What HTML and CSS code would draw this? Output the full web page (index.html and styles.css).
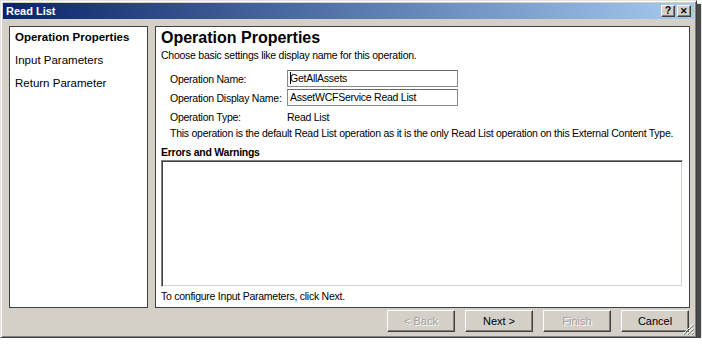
FILE: index.html
```
<!doctype html>
<html>
<head>
    <meta charset="utf-8">
    <title>Read List</title>
    <link rel="stylesheet" href="styles.css">
</head>
<body>
<div class="window">
	<div class="titlebar">
		<span class="title">Read List</span>
		<div class="caption-btns">
			<span class="cbtn">?</span>
			<span class="cbtn x">&#x2715;</span>
		</div>
	</div>
	<div class="content">
		<ul class="nav">
			<li class="active">Operation Properties</li>
			<li>Input Parameters</li>
			<li>Return Parameter</li>
		</ul>
		<div class="main">
			<h1>Operation Properties</h1>
			<p class="intro">Choose basic settings like display name for this operation.</p>
			<div class="form">
				<label>Operation Name:</label>
				<div class="field"><span class="caret"></span>GetAllAssets</div>
				<label>Operation Display Name:</label>
				<div class="field">AssetWCFService Read List</div>
				<label class="plain">Operation Type:</label>
				<span class="plain">Read List</span>
			</div>
			<p class="note">This operation is the default Read List operation as it is the only Read List operation on this External Content Type.</p>
			<h2>Errors and Warnings</h2>
			<div class="errors"></div>
			<p class="hint">To configure Input Parameters, click Next.</p>
		</div>
	</div>
	<div class="footer">
		<button class="btn" disabled>&lt; Back</button>
		<button class="btn">Next &gt;</button>
		<button class="btn" disabled>Finish</button>
		<button class="btn">Cancel</button>
	</div>
	<svg class="grip" width="12" height="12" viewBox="0 0 12 12">
		<path d="M11 1 L1 11 M11 5 L5 11 M11 9 L9 11" stroke="#fff" stroke-width="1"/>
		<path d="M12 2 L2 12 M12 6 L6 12 M12 10 L10 12" stroke="#808080" stroke-width="1"/>
	</svg>
</div>
</body>
</html>
```
FILE: styles.css
```
*{margin: 0;padding: 0;list-style: none;box-sizing: border-box;}
html,body{background: #fff;}
body{
	font-family: "Liberation Sans", Arial, sans-serif;
	font-size: 10.5px;color: #000;
	letter-spacing: -0.25px;
	white-space: nowrap;
}
.window{
	position: relative;
	width: 697px;height: 338px;
	background: #d4d0c8;
	border: 1px solid;
	border-color: #e6e3de #404040 #404040 #e6e3de;
	box-shadow: inset 1px 1px #fff, inset -1px -1px #808080, 4px 4px 1px #4a4a4a;
	padding: 2px 2px 0 2px;
	display: flex;flex-direction: column;
}
.titlebar{
	height: 16px;
	background: linear-gradient(to right, #0a246a, #a6caf0);
	display: flex;align-items: center;justify-content: space-between;
	padding: 0 3px 0 3px;
}
.title{
	color: #fff;font-weight: bold;font-size: 11px;letter-spacing: 0;
}
.caption-btns{display: flex;gap: 2px;}
.cbtn{
	width: 14px;height: 12px;
	background: #d4d0c8;
	border: 1px solid;
	border-color: #fff #404040 #404040 #fff;
	box-shadow: inset -1px -1px #808080;
	font-size: 10px;font-weight: bold;line-height: 10px;
	text-align: center;letter-spacing: 0;
}
.cbtn.x{font-size: 9px;}
.content{
	display: flex;gap: 7px;
	padding: 7px 4px 0 6px;
	height: 289px;
}
.nav{
	width: 139px;height: 282px;
	background: #fff;
	border: 1px solid #404040;
	padding: 0 0 0 5px;
}
.nav li{
	line-height: 21px;margin-bottom: 2px;
	font-size: 11.5px;letter-spacing: 0;
}
.nav li.active{font-weight: bold;}
.main{
	width: 535px;height: 282px;
	background: #fff;
	border: 1px solid #404040;
	padding: 1px 5px 0 5px;
}
h1{
	font-size: 16px;font-weight: bold;line-height: 20px;letter-spacing: 0;
}
.intro{line-height: 14px;}
.form{
	display: grid;
	grid-template-columns: 117px 171px;
	grid-auto-rows: 17px;
	row-gap: 2px;
	align-items: center;
	margin: 8px 0 0 9px;
}
.form .plain{line-height: 14px;}
.field{
	height: 17px;
	border: 1px solid #8a8a8a;
	border-top-color: #6a6a6a;
	padding-left: 2px;
	line-height: 15px;
	position: relative;
}
.caret{
	position: absolute;left: 2px;top: 1px;
	width: 1px;height: 12px;background: #000;
}
.note{
	line-height: 14px;margin: 1px 0 0 9px;
}
h2{
	font-size: 10.5px;font-weight: bold;line-height: 14px;
	margin-top: 5px;
}
.errors{
	width: 522px;height: 127px;
	margin-top: 1px;
	background: #fff;
	border: 1px solid;
	border-color: #808080 #fff #fff #808080;
	box-shadow: inset 1px 1px #404040, inset -1px -1px #d4d0c8;
}
.hint{line-height: 14px;margin-top: 2px;}
.footer{
	display: flex;justify-content: flex-end;gap: 10px;
	padding: 2px 5px 0 0;
}
.btn{
	width: 68px;height: 22px;
	background: #d4d0c8;
	font-family: "Liberation Sans", Arial, sans-serif;
	font-size: 11px;color: #000;
	border: 1px solid;
	border-color: #fff #404040 #404040 #fff;
	box-shadow: inset -1px -1px #808080;
}
.btn:disabled{
	color: #a0a0a0;
	text-shadow: 1px 1px #fff;
}
.grip{
	position: absolute;right: 2px;bottom: 2px;
}
```
